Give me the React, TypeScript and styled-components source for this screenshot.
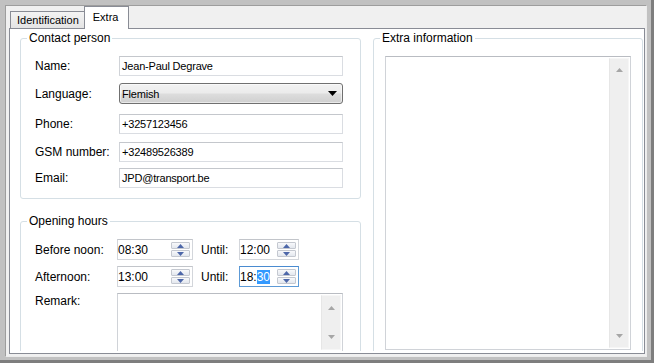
import React from "react";
import styled, { createGlobalStyle, css } from "styled-components";

const Global = createGlobalStyle`
  html, body { margin: 0; padding: 0; background: #c1c1c1; }
  * { box-sizing: border-box; }
  body { font-family: "Liberation Sans", Arial, sans-serif; }
`;

const FONT = `"Liberation Sans", Arial, sans-serif`;

const Frame = styled.div`
  width: 654px;
  height: 363px;
  background: #c1c1c1;
  border-right: 3px solid #7e7e7e;
  border-bottom: 3px solid #7e7e7e;
  padding: 5px 4px 3px 5px;
  display: flex;
`;

const Panel = styled.div`
  flex: 1;
  min-height: 0;
  display: flex;
  flex-direction: column;
  background: #f0f0f0;
  border: 1px solid;
  border-color: #9d9d9d #ececec #ececec #9d9d9d;
  padding: 0 1px 2px 3px;
`;

const TabStrip = styled.div`
  flex: none;
  height: 22px;
  display: flex;
  align-items: flex-end;
  padding-left: 1px;
`;

const Tab = styled.div<{ $active?: boolean }>`
  font: 11px/12px ${FONT};
  color: #000;
  border: 1px solid #898c95;
  border-bottom: none;
  white-space: nowrap;
  ${(p) =>
    p.$active
      ? css`
          height: 23px;
          margin-bottom: -1px;
          margin-left: -1px;
          background: #fff;
          padding: 4px 10px 0 8px;
          position: relative;
          z-index: 1;
        `
      : css`
          height: 17px;
          background: linear-gradient(#f3f3f3, #e4e4e4);
          padding: 2px 5px 0 6px;
        `}
`;

const Pane = styled.div`
  flex: 1;
  min-height: 0;
  background: #fff;
  border: 1px solid #898c95;
  display: flex;
  flex-direction: column;
`;

const PaneContent = styled.div`
  flex: 1;
  min-height: 0;
  overflow: hidden;
  margin-bottom: 2px;
  display: flex;
  align-items: flex-start;
  gap: 12px;
  padding: 2px 0 0 10px;
`;

const Column = styled.div<{ $w: number }>`
  flex: none;
  width: ${(p) => p.$w}px;
  display: flex;
  flex-direction: column;
`;

const Group = styled.fieldset<{ $mt?: number }>`
  margin: ${(p) => p.$mt ?? 0}px 0 0 0;
  padding: 0;
  min-width: 0;
  border: 1px solid #d5dfe5;
  border-radius: 3px;
`;

const Caption = styled.legend`
  margin-left: 6px;
  padding: 0 2px;
  font: 12px/14px ${FONT};
  color: #000;
`;

const GroupBody = styled.div<{ $p: string }>`
  padding: ${(p) => p.$p};
  display: flex;
  flex-direction: column;
`;

const FieldRow = styled.div<{ $mt?: number; $top?: boolean }>`
  display: flex;
  align-items: ${(p) => (p.$top ? "flex-start" : "center")};
  margin-top: ${(p) => p.$mt ?? 0}px;
`;

const Label = styled.span<{ $w: number; $mt?: number }>`
  flex: none;
  width: ${(p) => p.$w}px;
  margin-top: ${(p) => p.$mt ?? 0}px;
  font: 12px/14px ${FONT};
  color: #000;
  white-space: nowrap;
`;

const TextBox = styled.div<{ $h?: number }>`
  width: 224px;
  height: ${(p) => p.$h ?? 20}px;
  border: 1px solid #dadde2;
  border-top-color: #c4c7cc;
  border-left-color: #d0d3d8;
  background: #fff;
  padding-left: 2px;
  display: flex;
  align-items: center;
  font: 11px/12px ${FONT};
  letter-spacing: -0.2px;
  color: #000;
  white-space: nowrap;
`;

const Select = styled.div`
  width: 224px;
  height: 21px;
  border: 1px solid #707070;
  border-radius: 3px;
  background: linear-gradient(#f2f2f2 0%, #ebebeb 48%, #dddddd 52%, #cfcfcf 100%);
  box-shadow: inset 0 0 0 1px rgba(255, 255, 255, 0.55);
  display: flex;
  align-items: center;
  justify-content: space-between;
  padding: 0 5px 0 2px;
  font: 11px/12px ${FONT};
  letter-spacing: -0.2px;
  color: #000;
`;

const Spin = styled.div<{ $w: number; $focus?: boolean }>`
  flex: none;
  width: ${(p) => p.$w}px;
  height: 21px;
  border: 1px solid ${(p) => (p.$focus ? "#5d9ad6" : "#d3d6db")};
  border-top-color: ${(p) => (p.$focus ? "#4a8bd0" : "#c2c5ca")};
  background: #fff;
  display: flex;
  align-items: center;
  padding: 0 2px 0 0;
  font: 12px/14px ${FONT};
  color: #000;
  white-space: nowrap;
`;

const Selected = styled.span`
  background: #3399ff;
  color: #fff;
`;

const SpinButtons = styled.div`
  margin-left: auto;
  display: flex;
  flex-direction: column;
  gap: 1px;
`;

const SpinButton = styled.div`
  width: 19px;
  height: 7px;
  border: 1px solid #c4c8d0;
  border-radius: 1px;
  background: linear-gradient(#f8f9fb, #e3e7ee);
  display: flex;
  align-items: center;
  justify-content: center;
`;

const UntilLabel = styled.span`
  flex: none;
  width: 38px;
  margin-left: 8px;
  font: 12px/14px ${FONT};
  color: #000;
`;

const Memo = styled.div<{ $w: number; $h: number }>`
  flex: none;
  width: ${(p) => p.$w}px;
  height: ${(p) => p.$h}px;
  border: 1px solid #d0d3d8;
  border-top-color: #b9bcc2;
  background: #fff;
  display: flex;
  justify-content: flex-end;
  padding: 1px 1px 1px 0;
`;

const ScrollBar = styled.div<{ $pad: number }>`
  width: 20px;
  background: #efefef;
  border: 1px solid #f6f6f6;
  border-left-color: #e6e6e6;
  display: flex;
  flex-direction: column;
  justify-content: space-between;
  align-items: center;
  padding: ${(p) => p.$pad}px 0;
`;

const Arrow = ({ up, color, w = 7, h = 4 }: { up?: boolean; color: string; w?: number; h?: number }) => (
  <svg width={w} height={h} viewBox={`0 0 ${w} ${h}`} style={{ display: "block" }}>
    <polygon
      points={up ? `0,${h} ${w},${h} ${w / 2},0` : `0,0 ${w},0 ${w / 2},${h}`}
      fill={color}
    />
  </svg>
);

const SpinEdit = ({ w, focus, children }: { w: number; focus?: boolean; children: React.ReactNode }) => (
  <Spin $w={w} $focus={focus}>
    <span>{children}</span>
    <SpinButtons>
      <SpinButton>
        <Arrow up color="#4d67a9" />
      </SpinButton>
      <SpinButton>
        <Arrow color="#4d67a9" />
      </SpinButton>
    </SpinButtons>
  </Spin>
);

export default function App() {
  return (
    <>
      <Global />
      <Frame>
        <Panel>
          <TabStrip>
            <Tab>Identification</Tab>
            <Tab $active>Extra</Tab>
          </TabStrip>
          <Pane>
            <PaneContent>
              <Column $w={341}>
                <Group>
                  <Caption>Contact person</Caption>
                  <GroupBody $p="11px 16px 10px 14px">
                    <FieldRow>
                      <Label $w={84}>Name:</Label>
                      <TextBox>Jean-Paul Degrave</TextBox>
                    </FieldRow>
                    <FieldRow $mt={7}>
                      <Label $w={84}>Language:</Label>
                      <Select>
                        <span>Flemish</span>
                        <Arrow color="#000" w={9} h={5} />
                      </Select>
                    </FieldRow>
                    <FieldRow $mt={10}>
                      <Label $w={84}>Phone:</Label>
                      <TextBox>+3257123456</TextBox>
                    </FieldRow>
                    <FieldRow $mt={8}>
                      <Label $w={84}>GSM number:</Label>
                      <TextBox>+32489526389</TextBox>
                    </FieldRow>
                    <FieldRow $mt={6}>
                      <Label $w={84}>Email:</Label>
                      <TextBox>JPD@transport.be</TextBox>
                    </FieldRow>
                  </GroupBody>
                </Group>
                <Group $mt={15}>
                  <Caption>Opening hours</Caption>
                  <GroupBody $p="11px 16px 10px 14px">
                    <FieldRow>
                      <Label $w={82}>Before noon:</Label>
                      <SpinEdit w={76}>08:30</SpinEdit>
                      <UntilLabel>Until:</UntilLabel>
                      <SpinEdit w={60}>12:00</SpinEdit>
                    </FieldRow>
                    <FieldRow $mt={6}>
                      <Label $w={82}>Afternoon:</Label>
                      <SpinEdit w={76}>13:00</SpinEdit>
                      <UntilLabel>Until:</UntilLabel>
                      <SpinEdit w={60} focus>
                        18:<Selected>30</Selected>
                      </SpinEdit>
                    </FieldRow>
                    <FieldRow $mt={6} $top>
                      <Label $w={82} $mt={1}>Remark:</Label>
                      <Memo $w={226} $h={59}>
                        <ScrollBar $pad={10}>
                          <Arrow up color="#a6a6a6" />
                          <Arrow color="#a6a6a6" />
                        </ScrollBar>
                      </Memo>
                    </FieldRow>
                  </GroupBody>
                </Group>
              </Column>
              <Column $w={270}>
                <Group>
                  <Caption>Extra information</Caption>
                  <GroupBody $p="11px 11px 10px 11px">
                    <Memo $w={246} $h={294}>
                      <ScrollBar $pad={9}>
                        <Arrow up color="#a6a6a6" />
                        <Arrow color="#a6a6a6" />
                      </ScrollBar>
                    </Memo>
                  </GroupBody>
                </Group>
              </Column>
            </PaneContent>
          </Pane>
        </Panel>
      </Frame>
    </>
  );
}
